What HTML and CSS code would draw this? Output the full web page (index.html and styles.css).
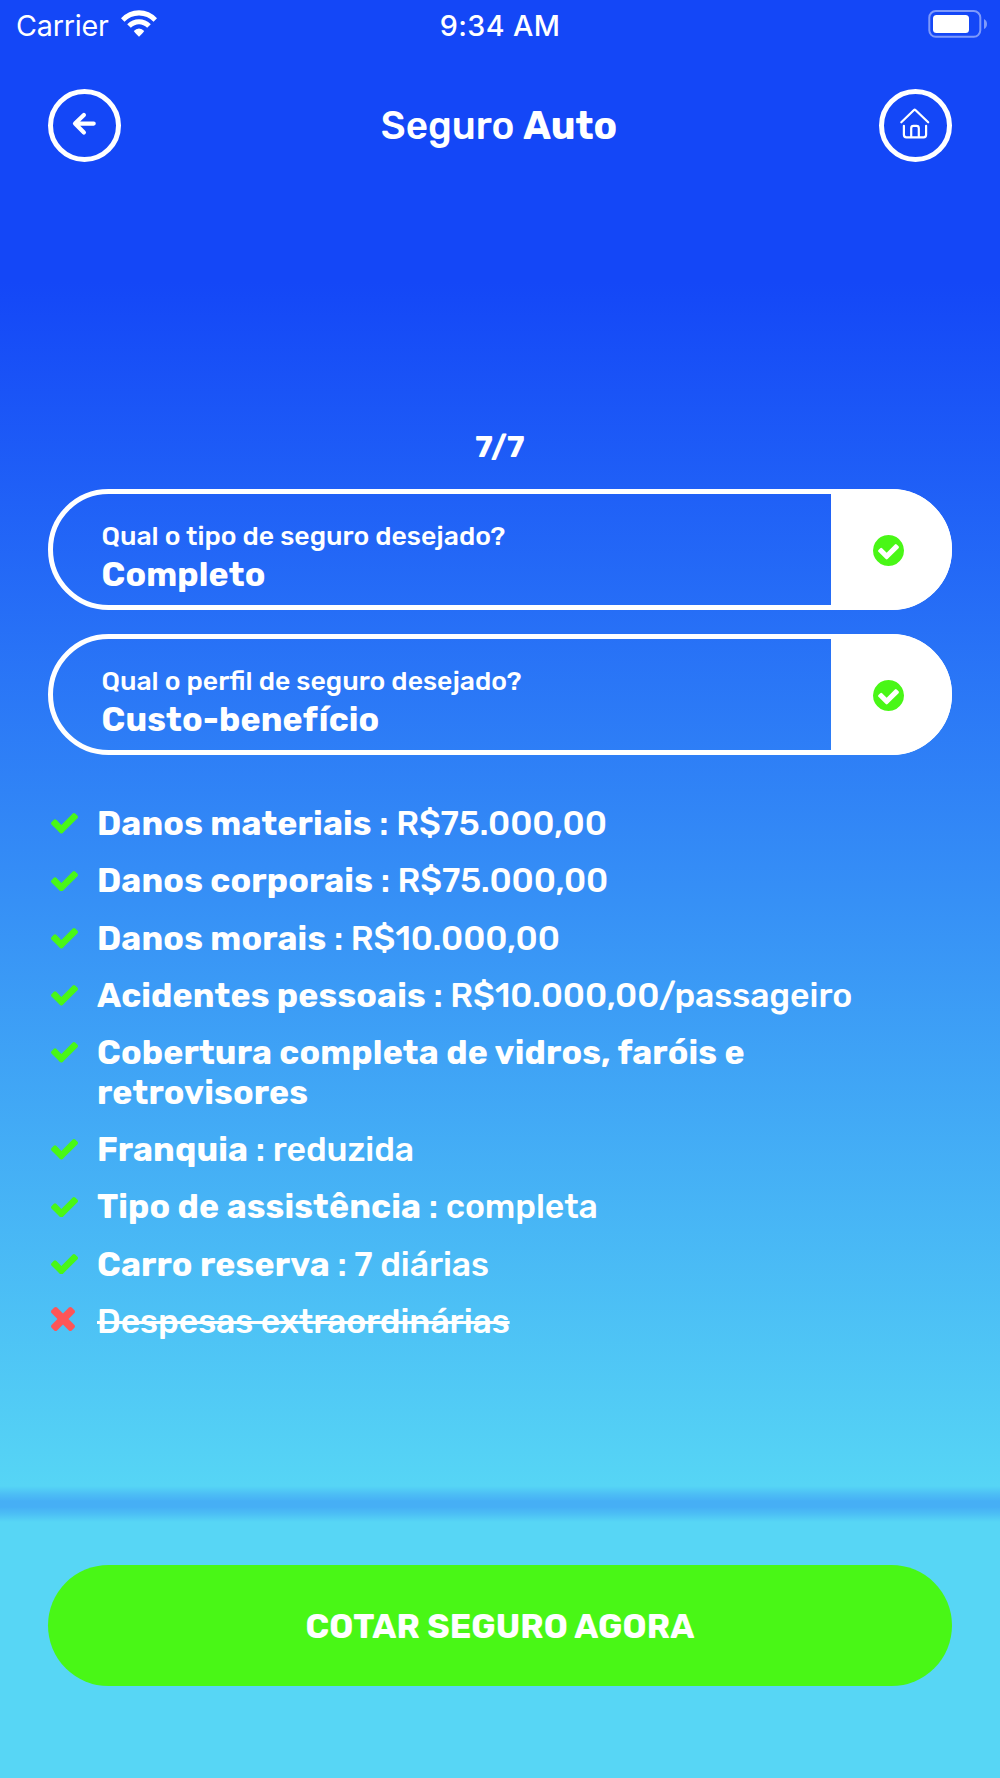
FILE: index.html
```html
<!DOCTYPE html>
<html lang="pt-BR">
<head>
<meta charset="utf-8">
<title>Seguro Auto</title>
<link rel="stylesheet" href="styles.css">
</head>
<body>
<svg class="sprite" aria-hidden="true">
  <symbol id="check" viewBox="121 334 1550 1188"><path d="M1671 566q0 40-28 68l-724 724-136 136q-28 28-68 28t-68-28l-136-136-362-362q-28-28-28-68t28-68l136-136q28-28 68-28t68 28l294 295 656-657q28-28 68-28t68 28l136 136q28 28 28 68z"/></symbol>
  <symbol id="times" viewBox="302 366 1188 1188"><path d="M1490 1322q0 40-28 68l-136 136q-28 28-68 28t-68-28l-294-294-294 294q-28 28-68 28t-68-28l-136-136q-28-28-28-68t28-68l294-294-294-294q-28-28-28-68t28-68l136-136q28-28 68-28t68 28l294 294 294-294q28-28 68-28t68 28l136 136q28 28 28 68t-28 68l-294 294 294 294q28 28 28 68z"/></symbol>
  <symbol id="check-circle" viewBox="128 128 1536 1536"><path d="M1412 734q0-28-18-46l-91-90q-19-19-45-19t-45 19l-408 407-226-226q-19-19-45-19t-45 19l-91 90q-18 18-18 46 0 27 18 45l362 362q19 19 45 19 27 0 46-19l543-543q18-18 18-45zm252 162q0 209-103 385.5t-279.5 279.5-385.5 103-385.5-103-279.5-279.5-103-385.5 103-385.5 279.5-279.5 385.5-103 385.5 103 279.5 279.5 103 385.5z"/></symbol>
</svg>
<div class="screen">
  <div class="status">
    <div class="carrier">
      <span>Carrier</span>
      <svg class="wifi" viewBox="0 0 36 27"><path d="M0 8.2Q7.5 .2 18 .2T36 8.2L32.5 11.8Q26.5 5.6 18 5.6T3.500 11.800Z"/><path d="M6.200 14.200Q11.300 9.200 18 9.200T29.800 14.200L26.200 17.800Q22.500 14.300 18 14.300T9.800 17.800Z"/><path d="M12.800 21.100Q15 18.500 18 18.500T23.200 21.100Q23.200 21.800 18 26.800Q12.800 21.800 12.800 21.100Z"/></svg>
    </div>
    <div class="time">9:34 AM</div>
    <div class="battery"><svg viewBox="0 0 60 28"><rect class="case" x="2.300" y="1.100" width="51" height="25.700" rx="6.500"/><rect x="6" y="5" width="36" height="18" rx="3.500"/><path class="cap" d="M57 9q3 1.500 3 5t-3 5z"/></svg></div>
  </div>
  <header class="header">
    <button class="round" aria-label="Voltar"><svg viewBox="0 0 63 63"><path class="arrow" d="M40.700 29.600H22.200M30.900 20.900L22 29.600 30.900 38.500"/></svg></button>
    <h1 class="title">Seguro <b>Auto</b></h1>
    <button class="round" aria-label="Início"><svg viewBox="0 0 63 63"><path class="home" d="M17.300 28.300L30 16Q30.700 15.300 31.400 16L44.200 28.300M19.900 31.800V40.800Q19.900 43.300 22.400 43.300H39.600Q42.100 43.300 42.100 40.800V31.800M27.200 43V34.200Q27.200 31.900 29.500 31.900H32.500Q34.800 31.900 34.800 34.200V43"/></svg></button>
  </header>
  <main class="content">
    <div class="step">7/7</div>
    <div class="field">
      <div class="field-text"><span class="question">Qual o tipo de seguro desejado?</span><span class="answer">Completo</span></div>
      <div class="field-state"><svg><use href="#check-circle"/></svg></div>
    </div>
    <div class="field">
      <div class="field-text"><span class="question">Qual o perfil de seguro desejado?</span><span class="answer">Custo-benefício</span></div>
      <div class="field-state"><svg><use href="#check-circle"/></svg></div>
    </div>
    <ul class="list">
      <li><svg class="yes"><use href="#check"/></svg><p><b>Danos materiais</b> : R$75.000,00</p></li>
      <li><svg class="yes"><use href="#check"/></svg><p><b>Danos corporais</b> : R$75.000,00</p></li>
      <li><svg class="yes"><use href="#check"/></svg><p><b>Danos morais</b> : R$10.000,00</p></li>
      <li><svg class="yes"><use href="#check"/></svg><p><b>Acidentes pessoais</b> : R$10.000,00/passageiro</p></li>
      <li><svg class="yes"><use href="#check"/></svg><p><b>Cobertura completa de vidros, faróis e<br>retrovisores</b></p></li>
      <li><svg class="yes"><use href="#check"/></svg><p><b>Franquia</b> : reduzida</p></li>
      <li><svg class="yes"><use href="#check"/></svg><p><b>Tipo de assistência</b> : completa</p></li>
      <li><svg class="yes"><use href="#check"/></svg><p><b>Carro reserva</b> : 7 diárias</p></li>
      <li><svg class="no"><use href="#times"/></svg><p><s>Despesas extraordinárias</s></p></li>
    </ul>
  </main>
  <footer class="footer">
    <button class="cta">COTAR SEGURO AGORA</button>
  </footer>
</div>
</body>
</html>
```
FILE: styles.css
```css
* { box-sizing: border-box; }
body { margin: 0; color: #fff; font-family: Rubik, Inter, sans-serif; font-weight: 500; }
button { font: inherit; color: inherit; background: none; border: 0; padding: 0; }
b { font-weight: 700; }
.sprite { display: none; }
.screen {
  width: 1000px; height: 1778px; overflow: hidden;
  display: flex; flex-direction: column;
  background: linear-gradient(180deg, #1447f7 282px, #56d5f5 1486px);
}
.status {
  height: 50px; padding: 0 13px 0 16px;
  display: grid; grid-template-columns: 1fr auto 1fr; align-items: center;
  font: 500 28.700px/50px Inter, sans-serif;
}
.carrier { display: flex; align-items: center; gap: 12px; font-weight: 400; letter-spacing: -0.200px; }
.carrier span, .time { padding-top: 1px; line-height: 49px; }
.time { letter-spacing: .4px; margin-right: 3px; }
.wifi { width: 36px; height: 27px; fill: #fff; margin-top: -4px; }
.battery { display: flex; justify-content: flex-end; margin-top: -2px; }
.battery svg { width: 60px; height: 28px; fill: #fff; }
.battery .case { fill: none; stroke: #fff; stroke-opacity: .45; stroke-width: 2; }
.battery .cap { fill-opacity: .45; }
.header {
  margin-top: 39px; padding: 0 48px; height: 73px;
  display: flex; justify-content: space-between; align-items: center;
}
.round { width: 73px; height: 73px; border: 5px solid #fff; border-radius: 50%; }
.round svg { display: block; width: 63px; height: 63px; fill: none; stroke: #fff; stroke-linecap: round; stroke-linejoin: round; }
.arrow { stroke-width: 4.200; }
.home { stroke-width: 2.200; }
.title { margin: 0; padding-right: 2px; font-size: 38.650px; font-weight: 500; line-height: 46px; }
.content { flex: 1; margin-top: 266px; padding: 0 48px; }
.step { height: 38px; line-height: 38px; font-size: 30.600px; font-weight: 700; text-align: center; }
.field {
  display: flex; height: 121px; margin-top: 23px;
  border: 5px solid #fff; border-radius: 61px;
}
.field + .field { margin-top: 24px; }
.field-text { flex: 1; padding: 25px 0 0 48.500px; display: flex; flex-direction: column; }
.question { font-size: 26.570px; line-height: 34px; }
.answer { font-size: 33.820px; font-weight: 700; line-height: 43px; letter-spacing: .15px; }
.field-state {
  width: 121px; margin: -5px -5px -5px 0; border-radius: 0 61px 61px 0;
  background: #fff; display: flex; align-items: center; padding: 2px 0 0 42px;
}
.field-state svg { width: 31px; height: 31px; fill: #49f716; }
.list { list-style: none; margin: 48.200px 0 0; padding: 0; display: flex; flex-direction: column; gap: 17.200px; font-size: 33.820px; line-height: 40px; }
.list li { display: grid; grid-template-columns: 49px 1fr; }
.list p { margin: 0; letter-spacing: -.08px; }
.list b { letter-spacing: .15px; }
.list svg { margin-left: 2.800px; }
.yes { width: 27px; height: 20.700px; margin-top: 10.300px; fill: #49f716; }
.no { width: 24px; height: 24px; margin-top: 6.800px; fill: #fe5558; }
.footer {
  height: 274px; padding: 61px 48px 0;
  background: linear-gradient(180deg, #46aff5 3px, #4cbff5 10px, #57d6f5 18px);
  position: relative;
}
.footer::before {
  content: ""; position: absolute; left: 0; right: 0; bottom: 100%; height: 18px;
  background: linear-gradient(180deg, #46aff500, #46aff599 45%, #46aff5 85%);
}
.cta { display: block; width: 100%; height: 121px; border-radius: 61px; background: #49f716; font-size: 33.820px; font-weight: 700; letter-spacing: .1px; }
```
